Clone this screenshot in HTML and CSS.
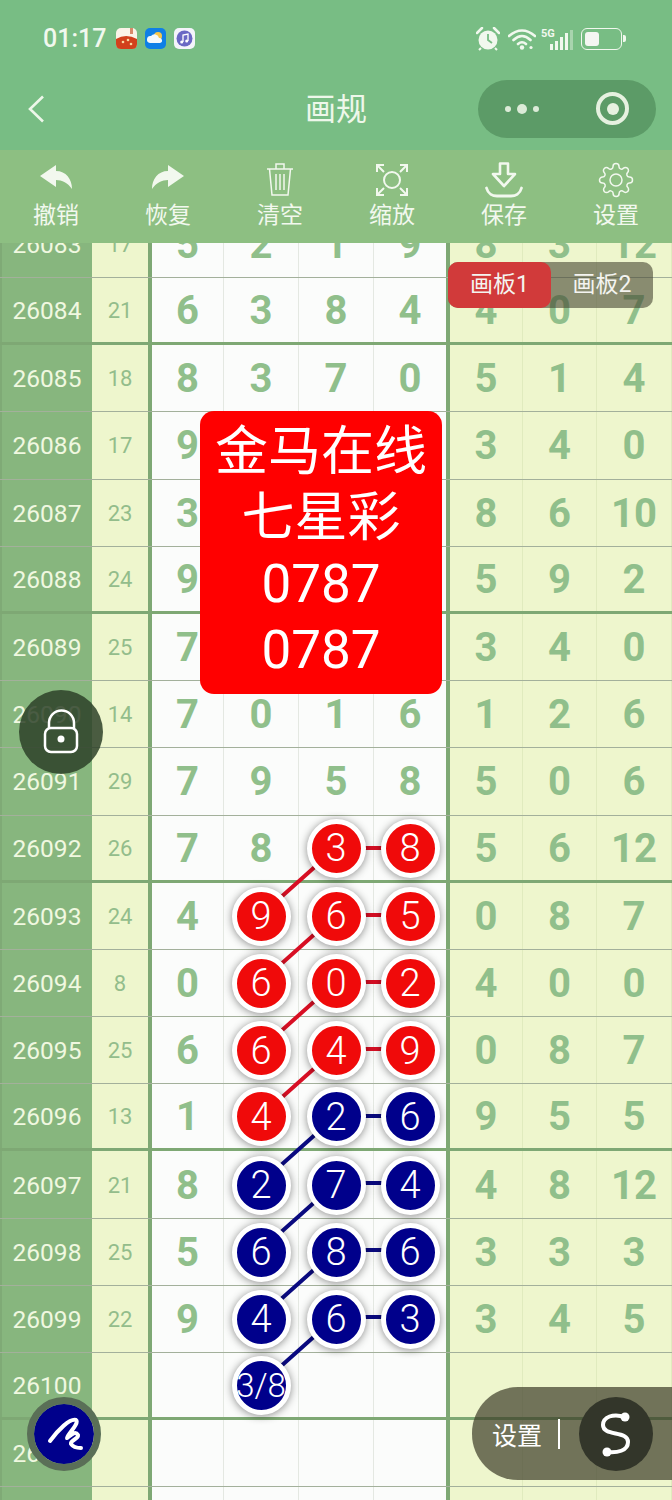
FILE: index.html
```html
<!DOCTYPE html>
<html lang="zh-CN">
  <head>
    <meta charset="UTF-8" />
    <meta name="viewport" content="width=device-width, initial-scale=1.0" />
    <title>画规</title>
    <link rel="stylesheet" href="styles.css">
  </head>
  <body>
    <div class="page">
      <!-- Status bar -->
      <div class="status">
        <span class="clock">01:17</span>
        <svg class="app" viewBox="0 0 21 21"><rect width="21" height="21" rx="5" fill="#fbf3e8"/><path d="M0 11 Q10 5 21 11 V16 Q21 21 16 21 H5 Q0 21 0 16Z" fill="#d2401c"/><circle cx="7" cy="14" r="1.3" fill="#f8d9a0"/><circle cx="12" cy="12" r="1.3" fill="#f8d9a0"/><circle cx="15" cy="16" r="1.3" fill="#f8d9a0"/><rect x="14" width="3" height="6" fill="#d98a6a"/></svg>
        <svg class="app" viewBox="0 0 21 21"><rect width="21" height="21" rx="5" fill="#0f7fe6"/><circle cx="13" cy="8" r="4" fill="#f7c64a"/><path d="M5 15 a3.500 3.500 0 0 1 1-7 a4.500 4.500 0 0 1 8 2 a2.500 2.500 0 0 1 1 5Z" fill="#f4f8fc"/></svg>
        <svg class="app" viewBox="0 0 21 21"><rect width="21" height="21" rx="5" fill="#f4f4fb"/><circle cx="10.500" cy="10.500" r="8" fill="#6a68c4"/><path d="M9 14 V7 L14 6 V13" fill="none" stroke="#fff" stroke-width="1.300"/><circle cx="7.700" cy="14" r="1.500" fill="#fff"/><circle cx="12.700" cy="13" r="1.500" fill="#fff"/></svg>
        <span class="status-right">
          <svg class="alarm" viewBox="0 0 24 24"><circle cx="12" cy="13" r="9.500" fill="#f1f8ee"/><path d="M12 7 V13 L16 16" fill="none" stroke="#78bd84" stroke-width="1.800"/><path d="M1 6 L6 1 M18 1 L23 6" stroke="#f1f8ee" stroke-width="2.500" stroke-linecap="round"/><path d="M5 21 L3 23 M19 21 L21 23" stroke="#f1f8ee" stroke-width="2"/></svg>
          <svg class="wifi" viewBox="0 0 28 22"><path d="M1 8 Q14 -3 27 8 M5.500 12 Q14 4 22.500 12 M10 16 Q14 12.500 18 16" fill="none" stroke="#f1f8ee" stroke-width="2.600" stroke-linecap="round"/><circle cx="14" cy="19.500" r="2.200" fill="#f1f8ee"/><circle cx="23" cy="19.500" r="1.600" fill="#f1f8ee"/></svg>
          <span class="net"><span class="five">5G</span><span class="bars"><i class="b1"></i><i class="b2"></i><i class="b3"></i><i class="b4"></i><i class="b5"></i></span></span>
          <span class="battery"><span class="level"></span></span><span class="nub"></span>
        </span>
      </div>

      <!-- Title bar -->
      <div class="nav">
        <svg class="back" viewBox="0 0 18 28"><path d="M16 1.500 L3 14 L16 26.500" fill="none" stroke="#eef7ea" stroke-width="2.600"/></svg>
        <span class="title">画规</span>
        <div class="capsule">
          <span class="dots"><i></i><i class="mid"></i><i></i></span>
          <span class="target"></span>
        </div>
      </div>

      <!-- Tools -->
      <div class="tools">
        <div class="tool">
          <svg class="tool-icon" viewBox="0 0 36 36"><path d="M2 14 L18 3 V9 C28 9 34 17 34 27 C30 21 24 18 18 18 V25 Z" fill="#f2f8ee"/></svg>
          <span>撤销</span>
        </div>
        <div class="tool">
          <svg class="tool-icon" viewBox="0 0 36 36"><path d="M34 14 L18 3 V9 C8 9 2 17 2 27 C6 21 12 18 18 18 V25 Z" fill="#f2f8ee"/></svg>
          <span>恢复</span>
        </div>
        <div class="tool">
          <svg class="tool-icon" viewBox="0 0 36 36"><path d="M5 7 H31 M14 7 V2 H22 V7 M7.500 7 L10 33 H26 L28.500 7 M14 12 V28 M18 12 V28 M22 12 V28" fill="none" stroke="#f2f8ee" stroke-width="1.500"/></svg>
          <span>清空</span>
        </div>
        <div class="tool">
          <svg class="tool-icon" viewBox="0 0 36 36"><circle cx="18" cy="18" r="8" fill="none" stroke="#f2f8ee" stroke-width="2"/><path d="M3 10 V3 H10 M4 4 L10 10 M26 3 H33 V10 M32 4 L26 10 M3 26 V33 H10 M4 32 L10 26 M33 26 V33 H26 M32 32 L26 26" fill="none" stroke="#f2f8ee" stroke-width="2"/></svg>
          <span>缩放</span>
        </div>
        <div class="tool">
          <svg class="tool-icon save-icon" viewBox="0 0 38 36"><path d="M15 1.500 H23 V12 H30 L19 24 L8 12 H15 Z" fill="none" stroke="#f2f8ee" stroke-width="2.600" stroke-linejoin="round"/><path d="M1.500 26 C3 32 8 34 12 34 H26 C30 34 35 32 36.500 26" fill="none" stroke="#f2f8ee" stroke-width="2.800" stroke-linecap="round"/></svg>
          <span>保存</span>
        </div>
        <div class="tool">
          <svg class="tool-icon" viewBox="0 0 24 24"><circle cx="12" cy="12" r="4" fill="none" stroke="#f2f8ee" stroke-width="1"/><path d="M19.400 15a1.650 1.650 0 0 0 .33 1.820l.06.06a2 2 0 0 1 0 2.830 2 2 0 0 1-2.830 0l-.06-.06a1.650 1.650 0 0 0-1.820-.33 1.650 1.650 0 0 0-1 1.510V21a2 2 0 0 1-2 2 2 2 0 0 1-2-2v-.09A1.650 1.650 0 0 0 9 19.400a1.650 1.650 0 0 0-1.820.33l-.06.06a2 2 0 0 1-2.830 0 2 2 0 0 1 0-2.830l.06-.06a1.650 1.650 0 0 0 .33-1.820 1.650 1.650 0 0 0-1.510-1H3a2 2 0 0 1-2-2 2 2 0 0 1 2-2h.09A1.650 1.650 0 0 0 4.600 9a1.650 1.650 0 0 0-.33-1.820l-.06-.06a2 2 0 0 1 0-2.830 2 2 0 0 1 2.830 0l.06.06a1.650 1.650 0 0 0 1.820.33H9a1.650 1.650 0 0 0 1-1.510V3a2 2 0 0 1 2-2 2 2 0 0 1 2 2v.09a1.650 1.650 0 0 0 1 1.510 1.650 1.650 0 0 0 1.820-.33l.06-.06a2 2 0 0 1 2.830 0 2 2 0 0 1 0 2.830l-.06.06a1.650 1.650 0 0 0-.33 1.820V9a1.650 1.650 0 0 0 1.510 1H21a2 2 0 0 1 2 2 2 2 0 0 1-2 2h-.09a1.650 1.650 0 0 0-1.510 1z" fill="none" stroke="#f2f8ee" stroke-width="1"/></svg>
          <span>设置</span>
        </div>
      </div>

      <!-- Chart -->
      <div class="board">
        <div class="sheet">
          <div class="row"><span class="no">26083</span><span class="sum">17</span><span class="c">5</span><span class="c">2</span><span class="c">1</span><span class="c last">9</span><span class="y">8</span><span class="y">3</span><span class="y">12</span></div>
          <div class="row end"><span class="no">26084</span><span class="sum">21</span><span class="c">6</span><span class="c">3</span><span class="c">8</span><span class="c last">4</span><span class="y">4</span><span class="y">0</span><span class="y">7</span></div>
          <div class="row"><span class="no">26085</span><span class="sum">18</span><span class="c">8</span><span class="c">3</span><span class="c">7</span><span class="c last">0</span><span class="y">5</span><span class="y">1</span><span class="y">4</span></div>
          <div class="row"><span class="no">26086</span><span class="sum">17</span><span class="c">9</span><span class="c"></span><span class="c"></span><span class="c last"></span><span class="y">3</span><span class="y">4</span><span class="y">0</span></div>
          <div class="row"><span class="no">26087</span><span class="sum">23</span><span class="c">3</span><span class="c"></span><span class="c"></span><span class="c last"></span><span class="y">8</span><span class="y">6</span><span class="y">10</span></div>
          <div class="row end"><span class="no">26088</span><span class="sum">24</span><span class="c">9</span><span class="c"></span><span class="c"></span><span class="c last"></span><span class="y">5</span><span class="y">9</span><span class="y">2</span></div>
          <div class="row"><span class="no">26089</span><span class="sum">25</span><span class="c">7</span><span class="c"></span><span class="c"></span><span class="c last"></span><span class="y">3</span><span class="y">4</span><span class="y">0</span></div>
          <div class="row"><span class="no">26090</span><span class="sum">14</span><span class="c">7</span><span class="c">0</span><span class="c">1</span><span class="c last">6</span><span class="y">1</span><span class="y">2</span><span class="y">6</span></div>
          <div class="row"><span class="no">26091</span><span class="sum">29</span><span class="c">7</span><span class="c">9</span><span class="c">5</span><span class="c last">8</span><span class="y">5</span><span class="y">0</span><span class="y">6</span></div>
          <div class="row end"><span class="no">26092</span><span class="sum">26</span><span class="c">7</span><span class="c">8</span><span class="c"><b class="ball red">3</b></span><span class="c last"><b class="ball red">8</b></span><span class="y">5</span><span class="y">6</span><span class="y">12</span></div>
          <div class="row"><span class="no">26093</span><span class="sum">24</span><span class="c">4</span><span class="c"><b class="ball red">9</b></span><span class="c"><b class="ball red">6</b></span><span class="c last"><b class="ball red">5</b></span><span class="y">0</span><span class="y">8</span><span class="y">7</span></div>
          <div class="row"><span class="no">26094</span><span class="sum">8</span><span class="c">0</span><span class="c"><b class="ball red">6</b></span><span class="c"><b class="ball red">0</b></span><span class="c last"><b class="ball red">2</b></span><span class="y">4</span><span class="y">0</span><span class="y">0</span></div>
          <div class="row"><span class="no">26095</span><span class="sum">25</span><span class="c">6</span><span class="c"><b class="ball red">6</b></span><span class="c"><b class="ball red">4</b></span><span class="c last"><b class="ball red">9</b></span><span class="y">0</span><span class="y">8</span><span class="y">7</span></div>
          <div class="row end"><span class="no">26096</span><span class="sum">13</span><span class="c">1</span><span class="c"><b class="ball red">4</b></span><span class="c"><b class="ball blue">2</b></span><span class="c last"><b class="ball blue">6</b></span><span class="y">9</span><span class="y">5</span><span class="y">5</span></div>
          <div class="row"><span class="no">26097</span><span class="sum">21</span><span class="c">8</span><span class="c"><b class="ball blue">2</b></span><span class="c"><b class="ball blue">7</b></span><span class="c last"><b class="ball blue">4</b></span><span class="y">4</span><span class="y">8</span><span class="y">12</span></div>
          <div class="row"><span class="no">26098</span><span class="sum">25</span><span class="c">5</span><span class="c"><b class="ball blue">6</b></span><span class="c"><b class="ball blue">8</b></span><span class="c last"><b class="ball blue">6</b></span><span class="y">3</span><span class="y">3</span><span class="y">3</span></div>
          <div class="row"><span class="no">26099</span><span class="sum">22</span><span class="c">9</span><span class="c"><b class="ball blue">4</b></span><span class="c"><b class="ball blue">6</b></span><span class="c last"><b class="ball blue">3</b></span><span class="y">3</span><span class="y">4</span><span class="y">5</span></div>
          <div class="row end"><span class="no">26100</span><span class="sum"></span><span class="c"></span><span class="c"><b class="ball blue small">3/8</b></span><span class="c"></span><span class="c last"></span><span class="y"></span><span class="y"></span><span class="y"></span></div>
          <div class="row"><span class="no">26101</span><span class="sum"></span><span class="c"></span><span class="c"></span><span class="c"></span><span class="c last"></span><span class="y"></span><span class="y"></span><span class="y"></span></div>
          <div class="row"><span class="no"></span><span class="sum"></span><span class="c"></span><span class="c"></span><span class="c"></span><span class="c last"></span><span class="y"></span><span class="y"></span><span class="y"></span></div>
        </div>

        <!-- joins between the balls, page x / board y -->
        <svg class="links" viewBox="0 0 672 1257">
          <g stroke="#d80f24" stroke-width="4">
            <path d="M336 605 L261 672 M336 672 L261 739 M336 739 L261 806 M336 806 L261 873"/>
            <path d="M336 605 H410 M336 672 H410 M336 739 H410 M336 806 H410"/>
          </g>
          <g stroke="#0a0a80" stroke-width="4">
            <path d="M336 873 L261 940 M336 940 L261 1007 M336 1007 L261 1074 M336 1074 L261 1141"/>
            <path d="M336 873 H410 M336 940 H410 M336 1007 H410 M336 1074 H410"/>
          </g>
        </svg>

        <div class="switch">
          <span class="tab on">画板1</span>
          <span class="tab">画板2</span>
        </div>

        <div class="notice">
          <div>金马在线</div>
          <div>七星彩</div>
          <div>0787</div>
          <div>0787</div>
        </div>

        <div class="lock">
          <svg viewBox="0 0 84 84"><path d="M30 38 V33 a12.500 12.500 0 0 1 25 0 V38" fill="none" stroke="#fff" stroke-width="2.500"/><rect x="26" y="38" width="32" height="24" rx="6" fill="none" stroke="#fff" stroke-width="2.500"/><circle cx="42" cy="49" r="3.500" fill="#fff"/></svg>
        </div>

        <div class="pen">
          <svg viewBox="0 0 60 60"><path d="M16 37 C24 26 36 14 42 16 C46 19 32 32 33 34 C36 32 41 26 44 31 C45 35 36 36 37 40 C39 43 44 44 47 44" fill="none" stroke="#fff" stroke-width="4" stroke-linecap="round" stroke-linejoin="round"/></svg>
        </div>

        <div class="setup">
          <span class="setup-text">设置</span>
          <span class="setup-line"></span>
          <span class="setup-round">
            <svg viewBox="0 0 74 74"><path d="M46 20 C34 16 24 20 24 28 C24 40 49 33 49 45 C49 54 38 56 28 55" fill="none" stroke="#fff" stroke-width="4"/><circle cx="46" cy="20" r="4.500" fill="#fff"/><circle cx="28" cy="55" r="4.500" fill="#fff"/></svg>
          </span>
        </div>
      </div>
    </div>
  </body>
</html>
```

FILE: styles.css
```css
* {
  box-sizing: border-box;
}
body {
  margin: 0;
  font-family: Roboto, "Noto Sans CJK SC", sans-serif;
  background-color: #ffffff;
}
.page {
  display: flex;
  flex-direction: column;
  height: 100vh;
  overflow: hidden;
}

/* status bar */
.status {
  display: flex;
  align-items: center;
  height: 75px;
  padding: 2px 46px 0 43px;
  background-color: #78bd84;
  color: #f1f8ee;
}
.clock {
  font-size: 25px;
  font-weight: 500;
  margin-right: 10px;
}
.app {
  width: 21px;
  height: 21px;
  margin-right: 8px;
}
.status-right {
  display: flex;
  align-items: center;
  margin-left: auto;
}
.alarm {
  width: 24px;
  height: 24px;
  margin-right: 8px;
}
.wifi {
  width: 28px;
  height: 22px;
  margin-right: 5px;
}
.net {
  position: relative;
  display: block;
  width: 32px;
  height: 22px;
  margin-right: 8px;
}
.five {
  position: absolute;
  left: 0;
  top: -1px;
  font-size: 11px;
  font-weight: 700;
}
.bars {
  display: flex;
  align-items: flex-end;
  gap: 2px;
  height: 22px;
  justify-content: flex-end;
}
.bars i {
  display: block;
  width: 3px;
  background-color: #f1f8ee;
}
.bars .b1 { height: 6px; }
.bars .b2 { height: 9px; }
.bars .b3 { height: 13px; }
.bars .b4 { height: 17px; }
.bars .b5 {
  height: 20px;
  opacity: 0.4;
}
.battery {
  display: block;
  width: 41px;
  height: 22px;
  padding: 3px;
  border: 1.5px solid #f1f8ee;
  border-radius: 6px;
}
.level {
  display: block;
  width: 14px;
  height: 100%;
  background-color: #f4f6f2;
  border-radius: 3px;
}
.nub {
  display: block;
  width: 3px;
  height: 7px;
  margin-left: 1px;
  background-color: #f1f8ee;
  border-radius: 0 2px 2px 0;
}

/* title bar */
.nav {
  display: flex;
  align-items: center;
  position: relative;
  height: 75px;
  padding: 0 16px 8px 27px;
  background-color: #78bd84;
}
.back {
  width: 18px;
  height: 28px;
}
.title {
  position: absolute;
  left: 0;
  right: 0;
  top: 13px;
  text-align: center;
  font-size: 31px;
  line-height: 44px;
  color: #eef7ea;
}
.capsule {
  display: flex;
  align-items: center;
  justify-content: space-between;
  width: 178px;
  height: 58px;
  margin-left: auto;
  padding: 0 27px 0 27px;
  background-color: #5c9b67;
  border-radius: 29px;
}
.dots {
  display: flex;
  align-items: center;
  gap: 6px;
}
.dots i {
  display: block;
  width: 6px;
  height: 6px;
  background-color: #dcebd8;
  border-radius: 50%;
}
.dots .mid {
  width: 10px;
  height: 10px;
}
.target {
  position: relative;
  display: block;
  width: 33px;
  height: 33px;
  border: 4px solid #e6f1e0;
  border-radius: 50%;
}
.target::after {
  content: "";
  position: absolute;
  left: 6.500px;
  top: 6.500px;
  width: 12px;
  height: 12px;
  background-color: #e6f1e0;
  border-radius: 50%;
}

/* toolbar */
.tools {
  display: flex;
  height: 93px;
  background-color: #8dbf82;
}
.tool {
  display: flex;
  flex-direction: column;
  align-items: center;
  width: 112px;
  padding-top: 12px;
  color: #f2f8ee;
  font-size: 23px;
  line-height: 30px;
}
.tool-icon {
  width: 36px;
  height: 36px;
  margin-bottom: 3px;
}
.save-icon {
  width: 38px;
}

/* chart */
.board {
  position: relative;
  flex: 1;
  overflow: hidden;
}
.sheet {
  margin-top: -32.2px;
}
.row {
  display: grid;
  grid-template-columns: 92px 60px 72px 75px 75px 76px 73px 74px 75px;
  height: 67.2px;
  border-bottom: 1px solid #a3b09b;
}
.row.end {
  border-bottom: 3px solid #7ea874;
}
.row > span {
  display: flex;
  align-items: center;
  justify-content: center;
  padding-top: 1px;
}
.no {
  background-color: #87b67e;
  border-left: 2px solid #7faa76;
  color: #f0f8e0;
  font-size: 24.5px;
}
.sum {
  background-color: #eef6cd;
  border-right: 4px solid #7ea874;
  color: #93bd8b;
  font-size: 22px;
}
.c,
.y {
  font-size: 40px;
  font-weight: 700;
  color: #90bf8b;
}
.c {
  background-color: #fbfcfb;
  border-right: 1px solid #e4e8e2;
}
.c.last {
  border-right: 4px solid #7ea874;
}
.y {
  background-color: #eef6cd;
  border-right: 1px solid #e0ebbe;
}

/* balls */
.ball {
  position: relative;
  z-index: 2;
  display: flex;
  align-items: center;
  justify-content: center;
  flex: none;
  width: 59px;
  height: 59px;
  border: 5.5px solid #ffffff;
  border-radius: 50%;
  box-shadow: 0 1px 8px rgba(0, 0, 0, 0.45);
  color: #ffffff;
  font-size: 38px;
  font-weight: 300;
}
.red {
  background-color: #f00a0a;
}
.blue {
  background-color: #00008b;
}
.small {
  font-size: 33px;
  white-space: nowrap;
}
.links {
  position: absolute;
  left: 0;
  top: 0;
  z-index: 1;
  width: 672px;
  height: 1257px;
}

/* things lying over the chart */
.switch {
  position: absolute;
  left: 448px;
  top: 19px;
  z-index: 3;
  display: flex;
  width: 205px;
  height: 46px;
  background-color: rgba(70, 70, 50, 0.6);
  border-radius: 10px;
}
.tab {
  width: 102px;
  text-align: center;
  font-size: 23px;
  line-height: 45px;
  color: #f4f4f0;
  border-radius: 10px;
}
.tab.on {
  width: 103px;
  background-color: #d13a3a;
}
.notice {
  position: absolute;
  left: 200px;
  top: 168px;
  z-index: 3;
  width: 242px;
  height: 283px;
  padding-top: 8px;
  background-color: #ff0000;
  border-radius: 14px;
  color: #ffffff;
  font-size: 53px;
  line-height: 66px;
  text-align: center;
}
.lock {
  position: absolute;
  left: 19px;
  top: 447px;
  z-index: 3;
  width: 84px;
  height: 84px;
  background-color: rgba(45, 65, 40, 0.85);
  border-radius: 50%;
}
.pen {
  position: absolute;
  left: 27px;
  top: 1154px;
  z-index: 3;
  width: 74px;
  height: 74px;
  padding: 7px;
  background-color: #00008b;
  background-clip: padding-box;
  border: 7px solid #5a6f57;
  border-radius: 50%;
}
.pen svg,
.lock svg,
.setup-round svg {
  display: block;
}
.pen svg {
  width: 60px;
  height: 60px;
  margin: -7px;
}
.setup {
  position: absolute;
  right: 0;
  top: 1144px;
  z-index: 3;
  display: flex;
  align-items: center;
  width: 200px;
  height: 93px;
  padding-left: 20px;
  background-color: rgba(60, 60, 40, 0.7);
  border-radius: 46px 0 0 46px;
  color: #ffffff;
  font-size: 25px;
}
.setup-line {
  width: 2px;
  height: 30px;
  margin-left: 16px;
  background-color: #ffffff;
}
.setup-round {
  width: 74px;
  height: 74px;
  margin-left: 19px;
  background-color: #33362a;
  border-radius: 50%;
}
```
